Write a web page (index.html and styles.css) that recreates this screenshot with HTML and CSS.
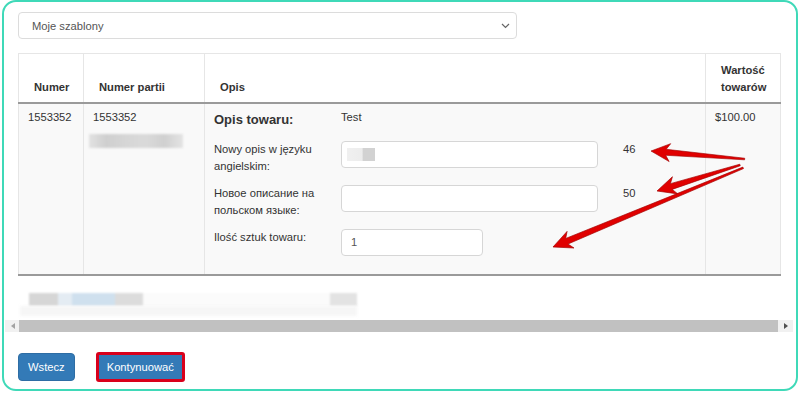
FILE: index.html
```html
<!DOCTYPE html>
<html>
  <head>
    <link rel="stylesheet" href="styles.css">
  </head>
  <body>
    <div class="frame">
      <div class="select">
        <span>Moje szablony</span>
        <svg class="chevron" width="9" height="6" viewBox="0 0 9 6"><polyline points="1,1 4.5,4.5 8,1" fill="none" stroke="#666" stroke-width="1.2"/></svg>
      </div>

      <table class="items">
        <colgroup>
          <col class="c-num">
          <col class="c-lot">
          <col class="c-desc">
          <col class="c-val">
        </colgroup>
        <thead>
          <tr>
            <th>Numer</th>
            <th>Numer partii</th>
            <th>Opis</th>
            <th>Wartość<br>towarów</th>
          </tr>
        </thead>
        <tbody>
          <tr>
            <td>1553352</td>
            <td>
              1553352
              <div class="blur-lot"></div>
            </td>
            <td class="desc">
              <div class="desc-grid">
                <div class="desc-title">Opis towaru:</div>
                <div class="desc-value">Test</div>
                <div></div>

                <div class="desc-label">Nowy opis w języku<br>angielskim:</div>
                <div class="field wide"><span class="blur-text"></span></div>
                <div class="count">46</div>

                <div class="desc-label">Новое описание на<br>польском языке:</div>
                <div class="field wide"></div>
                <div class="count">50</div>

                <div class="desc-label">Ilość sztuk towaru:</div>
                <div class="field narrow">1</div>
                <div></div>
              </div>
            </td>
            <td>$100.00</td>
          </tr>
        </tbody>
      </table>

      <div class="blur-row">
        <span class="b1"></span><span class="b2"></span><span class="b3"></span><span class="b4"></span><span class="b5"></span><span class="b6"></span>
      </div>
      <div class="blur-band"></div>

      <div class="hscroll">
        <span class="arrow-left"></span>
        <div class="thumb"></div>
        <span class="arrow-right"></span>
      </div>

      <div class="actions">
        <button class="btn">Wstecz</button>
        <button class="btn marked">Kontynuować</button>
      </div>
    </div>

    <svg class="annotations" width="800" height="393" viewBox="0 0 800 393">
      <g fill="#e00000" stroke="#a00000" stroke-width="0.6" stroke-linejoin="round">
        <polygon transform="translate(651,151) rotate(4.9)" points="0,0 19,-9 15,-3 94,-0.8 94,0.8 15,3 19,9"/>
        <polygon transform="translate(657,191) rotate(-17.4)" points="0,0 19,-9 15,-3 87,-0.8 87,0.8 15,3 19,9"/>
        <polygon transform="translate(553,247) rotate(-22.6)" points="0,0 19,-9 15,-3 206,-0.8 206,0.8 15,3 19,9"/>
      </g>
    </svg>
  </body>
</html>
```

FILE: styles.css
```css
body {
    margin: 0;
    background: #fff;
    font-family: "Liberation Sans", Arial, sans-serif;
    font-size: 11.2px;
    color: #333;
    position: relative;
    width: 800px;
    height: 393px;
    overflow: hidden;
}
.frame {
    box-sizing: border-box;
    width: 796px;
    height: 391px;
    margin-left: 2px;
    border: 2px solid #3fd9b8;
    border-radius: 14px;
    padding: 10px 0 0 14px;
}
.select {
    box-sizing: border-box;
    width: 499px;
    height: 27px;
    border: 1px solid #dcdcdc;
    border-radius: 4px;
    display: flex;
    align-items: center;
    justify-content: space-between;
    padding: 0 6px 0 13px;
    color: #555;
}
.chevron {
    display: block;
}
.items {
    margin-top: 14px;
    width: 762px;
    border-collapse: collapse;
    table-layout: fixed;
    border-top: 1px solid #e6e6e6;
    font: inherit;
}
.c-num { width: 65px; }
.c-lot { width: 121px; }
.c-desc { width: 501px; }
.c-val { width: 75px; }
.items th {
    text-align: left;
    vertical-align: bottom;
    font-weight: bold;
    line-height: 17px;
    padding: 8px 4px 6px 15px;
    border-left: 1px solid #e6e6e6;
    border-right: 1px solid #e6e6e6;
    border-bottom: 2px solid #9a9a9a;
}
.items td {
    vertical-align: top;
    line-height: 17px;
    padding: 5px 4px 18px 9px;
    background: #f9f9f9;
    border-left: 1px solid #e6e6e6;
    border-right: 1px solid #e6e6e6;
    border-bottom: 2px solid #9a9a9a;
}
.blur-lot {
    margin: 8px 0 0 -4px;
    width: 94px;
    height: 14px;
    background: linear-gradient(90deg, #e2e2e2 0%, #cfcfcf 18%, #d6d6d6 40%, #dadada 60%, #d0d0d0 80%, #e4e4e4 100%);
    filter: blur(1px);
}
.desc-grid {
    display: grid;
    grid-template-columns: 127px 282px auto;
    row-gap: 10px;
    align-items: start;
}
.desc-title {
    font-size: 13px;
    font-weight: bold;
    line-height: 22px;
}
.desc-label {
    line-height: 17px;
}
.field {
    box-sizing: border-box;
    height: 27px;
    background: #fff;
    border: 1px solid #d6d6d6;
    border-radius: 4px;
    padding: 0 9px;
    line-height: 25px;
    color: #555;
    display: flex;
    align-items: center;
}
.wide { width: 257px; }
.narrow { width: 142px; }
.blur-text {
    display: block;
    width: 28px;
    height: 13px;
    margin-left: -4px;
    background: linear-gradient(90deg, #f0f0f0 0%, #ececec 55%, #d2d2d2 56%, #d2d2d2 100%);
    filter: blur(0.6px);
}
.count {
    line-height: 17px;
}
.blur-row {
    margin-top: 17px;
    display: flex;
    height: 13px;
    margin-left: 11px;
    filter: blur(1px);
}
.blur-row span { display: block; height: 13px; }
.b1 { width: 29px; background: #d6d6d6; }
.b2 { width: 14px; background: #e4ecf3; }
.b3 { width: 43px; background: #cfe0ee; }
.b4 { width: 28px; background: #dcdcdc; }
.b5 { width: 187px; background: #fbfbfb; }
.b6 { width: 27px; background: #e3e3e3; }
.blur-band {
    margin-left: 2px;
    width: 337px;
    height: 10px;
    background: #f6f6f6;
    filter: blur(1.5px);
}
.hscroll {
    margin: 4px 0 0 -13px;
    width: 788px;
    height: 12px;
    background: #f1f1f1;
    display: flex;
    align-items: center;
}
.arrow-left {
    width: 0;
    height: 0;
    margin: 0 4px 0 6px;
    border-top: 3px solid transparent;
    border-bottom: 3px solid transparent;
    border-right: 4px solid #a3a3a3;
}
.thumb {
    flex: 1;
    height: 12px;
    background: #c1c1c1;
}
.arrow-right {
    width: 0;
    height: 0;
    margin: 0 5px 0 6px;
    border-top: 3px solid transparent;
    border-bottom: 3px solid transparent;
    border-left: 4px solid #505050;
}
.actions {
    margin-top: 21px;
    display: flex;
    gap: 22px;
}
.btn {
    height: 28px;
    padding: 0 9px;
    border: 1px solid #2e6da4;
    border-radius: 4px;
    background: #337ab7;
    color: #fff;
    font-family: "Liberation Sans", Arial, sans-serif;
    font-size: 11.2px;
}
.marked {
    outline: 3px solid #d9001b;
    outline-offset: -2px;
    border-radius: 2px;
}
.annotations {
    position: absolute;
    left: 0;
    top: 0;
    pointer-events: none;
}
```
